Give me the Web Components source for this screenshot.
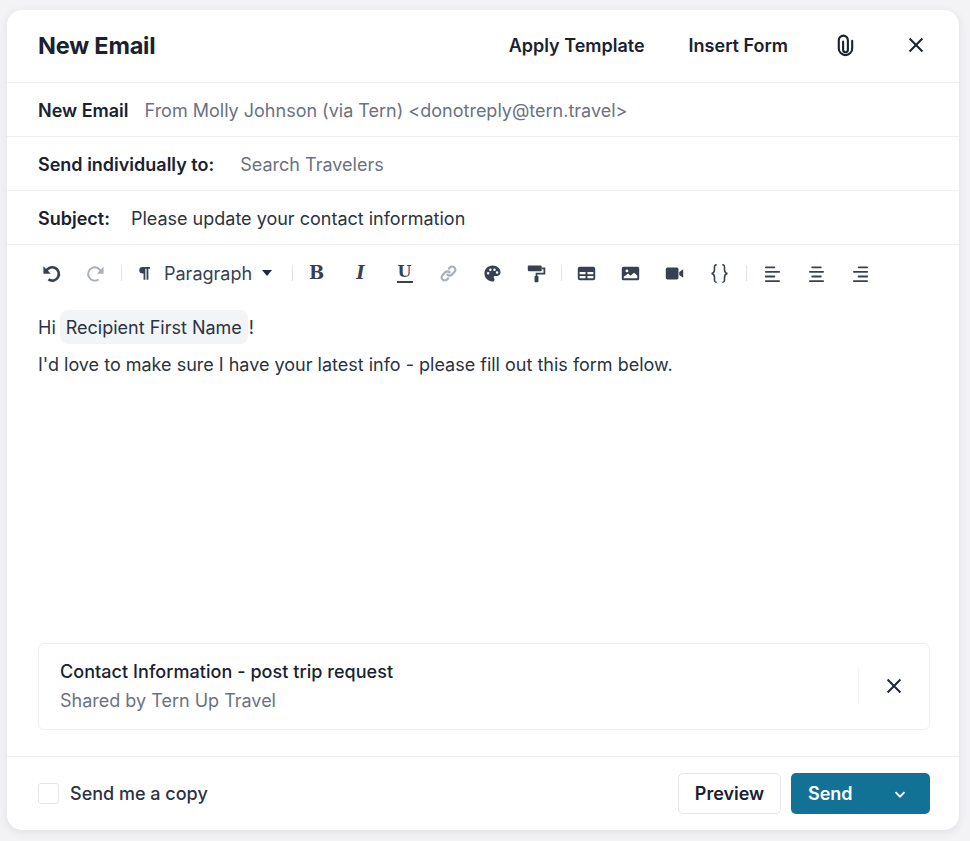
<!DOCTYPE html>
<html>
<head>
<meta charset="utf-8">
<title>New Email</title>
<style>
  html, body { margin: 0; height: 100%; }
  body {
    background: #f3f2f5;
    font-family: Inter, "Liberation Sans", sans-serif;
    color: #1a2230;
  }
</style>
</head>
<body>
<email-composer>
  <composer-header slot="header" title="New Email"></composer-header>
  <composer-row slot="rows" label="New Email" gap="16"><span class="muted">From Molly Johnson (via Tern) &lt;donotreply@tern.travel&gt;</span></composer-row>
  <composer-row slot="rows" label="Send individually to:" gap="26"><span class="muted">Search Travelers</span></composer-row>
  <composer-row slot="rows" label="Subject:" gap="21"><span>Please update your contact information</span></composer-row>
  <editor-toolbar slot="toolbar"></editor-toolbar>
  <editor-body slot="body"></editor-body>
  <attachment-card slot="attachment" name="Contact Information - post trip request" by="Shared by Tern Up Travel"></attachment-card>
  <composer-footer slot="footer"></composer-footer>
</email-composer>

<script>
const alignLines = (x1, x2) => `<g fill="currentColor"><rect x="${x1}" y="3" width="13" height="2.400" rx="1"/><rect x="${x2}" y="8.800" width="19" height="2.400" rx="1"/><rect x="${x1}" y="14.600" width="13" height="2.400" rx="1"/><rect x="${x2}" y="20.400" width="19" height="2.400" rx="1"/></g>`;

const ICONS = {
  undo: `<path d="M5.500 10.500A7.600 7.600 0 1 1 8.500 18.800" fill="none" stroke="currentColor" stroke-width="3"/><path d="M2.800 3.800v8.400h8.400z" fill="currentColor"/>`,
  redo: `<path d="M18.500 10.500A7.600 7.600 0 1 0 15.500 18.800" fill="none" stroke="currentColor" stroke-width="2.200"/><path d="M21.200 4.400v7.800h-7.800z" fill="currentColor"/>`,
  pilcrow: `<path d="M10 4h10v2.400h-2.200V21h-2.400V6.400h-1.600V21h-2.400v-8.400H10A4.300 4.300 0 0 1 10 4z" fill="currentColor"/>`,
  link: `<g fill="none" stroke="currentColor" stroke-width="2.800" stroke-linecap="round"><path d="M10.600 13.400a4 4 0 0 0 5.700 0l3.200-3.200a4 4 0 0 0-5.700-5.700l-1.300 1.300"/><path d="M13.400 10.600a4 4 0 0 0-5.700 0l-3.200 3.200a4 4 0 0 0 5.700 5.700l1.300-1.300"/></g>`,
  palette: `<path fill-rule="evenodd" fill="currentColor" d="M12 2C6.300 2 1.800 6.500 1.800 12.100s4.600 10 10.200 10c1.600 0 2.500-1.100 2.500-2.300 0-1.500-1.100-1.800-1.100-3 0-1 .9-1.700 2-1.700h2.400c2.700 0 4.400-2 4.400-4.600C21.800 5.500 17.600 2 12 2zM6.500 13.300a1.600 1.600 0 1 1 0-3.200 1.600 1.600 0 0 1 0 3.200zm2.800-4.300a1.600 1.600 0 1 1 0-3.200 1.600 1.600 0 0 1 0 3.200zm5.200-.2a1.600 1.600 0 1 1 0-3.200 1.600 1.600 0 0 1 0 3.200zm3.300 3.600a1.600 1.600 0 1 1 0-3.200 1.600 1.600 0 0 1 0 3.200z"/>`,
  roller: `<path fill="currentColor" d="M2 2h15.500a1 1 0 0 1 1 1v5a1 1 0 0 1-1 1H2a1 1 0 0 1-1-1V3a1 1 0 0 1 1-1z"/><path fill="none" stroke="currentColor" stroke-width="2.200" d="M18.500 5.500h3.500v6.700H12v3.500"/><rect x="9.500" y="15" width="5" height="8" rx="1" fill="currentColor"/>`,
  table: `<path fill-rule="evenodd" fill="currentColor" d="M3.500 3.500h17A2.500 2.500 0 0 1 23 6v12a2.500 2.500 0 0 1-2.500 2.500h-17A2.500 2.500 0 0 1 1 18V6a2.500 2.500 0 0 1 2.500-2.500zm-.2 6.600v3h7.500v-3H3.300zm9.900 0v3h7.500v-3h-7.500zm-9.900 5.100v2.900h7.500v-2.900H3.300zm9.900 0v2.900h7.500v-2.900h-7.500z"/>`,
  image: `<path fill-rule="evenodd" fill="currentColor" d="M3 3.500h18A2 2 0 0 1 23 5.500v13a2 2 0 0 1-2 2H3a2 2 0 0 1-2-2v-13a2 2 0 0 1 2-2zm.500 14.500h17v-3.500l-4-3.500-4.500 3.800L9 12l-5.500 4zM7.500 10.500a1.800 1.800 0 1 0 0-3.600 1.800 1.800 0 0 0 0 3.600z"/>`,
  video: `<rect x="1" y="4.500" width="16" height="15" rx="2" fill="currentColor"/><path d="M18 10.200 23 6.500v11l-5-3.700z" fill="currentColor"/>`,
  braces: `<g fill="none" stroke="currentColor" stroke-width="2"><path d="M8.500 1C5 1 5.700 3.500 5.700 7 5.700 10 5 11.500 2 12c3 .5 3.700 2 3.700 5 0 3.500-.7 6 2.800 6"/><path d="M15.500 1c3.500 0 2.800 2.500 2.800 6 0 3 .7 4.500 3.700 5-3 .5-3.700 2-3.700 5 0 3.500.7 6-2.800 6"/></g>`,
  left: alignLines(2.500, 2.500),
  center: alignLines(5.500, 2.500),
  right: alignLines(8.500, 2.500),
  close: `<path d="M5 5l14 14M19 5 5 19" fill="none" stroke="currentColor" stroke-width="2.200"/>`,
  clip: `<path d="M9.500 8v8.500a2.500 2.500 0 0 0 5 0V6.500a4.750 4.750 0 0 0-9.500 0V15a7 7 0 0 0 14 0V7" fill="none" stroke="currentColor" stroke-width="2.200" stroke-linecap="round"/>`,
  chevron: `<path d="M6 9.500l6 6 6-6" fill="none" stroke="currentColor" stroke-width="2.400"/>`
};

function svg(name, size) {
  return `<svg width="${size}" height="${size}" viewBox="0 0 24 24" aria-hidden="true">${ICONS[name]}</svg>`;
}

class EmailComposer extends HTMLElement {
  constructor() {
    super();
    this.attachShadow({ mode: "open" });
    this.shadowRoot.innerHTML = /* html */`
      <style>
        :host { display: block; box-sizing: border-box; height: 841px; padding: 10px 11px 11px 7px; }
        .card {
          height: 100%;
          display: flex;
          flex-direction: column;
          background: #fff;
          border-radius: 15px;
          box-shadow: 0 2px 10px rgba(60, 60, 90, 0.10);
          overflow: hidden;
        }
        .grow { flex: 1; min-height: 0; }
      </style>
      <div class="card">
        <slot name="header"></slot>
        <slot name="rows"></slot>
        <slot name="toolbar"></slot>
        <div class="grow"><slot name="body"></slot></div>
        <slot name="attachment"></slot>
        <slot name="footer"></slot>
      </div>
    `;
  }
}

class ComposerHeader extends HTMLElement {
  connectedCallback() {
    this.attachShadow({ mode: "open" }).innerHTML = /* html */`
      <style>
        :host { display: flex; box-sizing: border-box; height: 73px; align-items: center; padding: 0 31px 2px; border-bottom: 1px solid #eef0f2; color: #1a2230; }
        h1 { margin: 0; flex: 1; font-size: 23.500px; font-weight: 700; letter-spacing: -0.2px; }
        a { font-size: 18px; font-weight: 600; }
        .form { margin-left: 44px; }
        .clip { margin-left: 37px; width: 40px; display: flex; justify-content: center; }
        .close { margin-left: 40px; margin-right: 1px; display: flex; }
        svg { display: block; }
      </style>
      <h1>${this.getAttribute("title")}</h1>
      <a>Apply Template</a>
      <a class="form">Insert Form</a>
      <span class="clip">${svg("clip", 23)}</span>
      <span class="close">${svg("close", 22)}</span>
    `;
  }
}

class ComposerRow extends HTMLElement {
  connectedCallback() {
    this.attachShadow({ mode: "open" }).innerHTML = /* html */`
      <style>
        :host { display: flex; box-sizing: border-box; height: 54px; align-items: center; padding: 2px 31px 0; border-bottom: 1px solid #eef0f2; font-size: 18px; color: #2a3341; }
        b { font-weight: 600; color: #1a2230; margin-right: ${this.getAttribute("gap")}px; }
        ::slotted(.muted) { color: #6b7280; }
      </style>
      <b>${this.getAttribute("label")}</b>
      <slot></slot>
    `;
  }
}

class ToolButton extends HTMLElement {
  connectedCallback() {
    const dim = this.hasAttribute("dim");
    const text = this.getAttribute("text");
    this.attachShadow({ mode: "open" }).innerHTML = /* html */`
      <style>
        :host { display: flex; width: 44px; height: 24px; align-items: center; justify-content: center; color: ${dim ? "#aab0ba" : "#374151"}; }
        svg { display: block; }
        span { font-family: "DejaVu Serif", "Liberation Serif", serif; font-size: 18px; font-weight: 700; line-height: 20px; }
        .i { font-style: italic; }
        .u { border-bottom: 2px solid currentColor; line-height: 15px; font-size: 16px; padding: 0 1px 2px; }
      </style>
      ${text ? `<span class="${this.getAttribute("kind") || ""}">${text}</span>` : svg(this.getAttribute("icon"), this.getAttribute("size") || 19)}
    `;
  }
}

class EditorToolbar extends HTMLElement {
  constructor() {
    super();
    this.attachShadow({ mode: "open" });
    this.shadowRoot.innerHTML = /* html */`
      <style>
        :host { display: flex; align-items: center; box-sizing: border-box; height: 58px; padding: 0 0 2px 22px; }
        .sep { width: 1px; height: 16px; background: #dfe2e6; }
        .para { display: flex; align-items: center; font-size: 18px; color: #374151; margin: 0 20px 0 13px; }
        .para svg { display: block; margin-right: 11px; }
        .caret { width: 0; height: 0; border: 5.500px solid transparent; border-top: 6px solid #1f2937; border-bottom: 0; margin-left: 9.500px; }
      </style>
      <tool-button icon="undo" size="21"></tool-button>
      <tool-button icon="redo" size="21" dim></tool-button>
      <span class="sep" style="margin-left:4px"></span>
      <div class="para">${svg("pilcrow", 18)}Paragraph<span class="caret"></span></div>
      <span class="sep" style="margin-right:2px"></span>
      <tool-button text="B"></tool-button>
      <tool-button text="I" kind="i"></tool-button>
      <tool-button text="U" kind="u"></tool-button>
      <tool-button icon="link" dim></tool-button>
      <tool-button icon="palette"></tool-button>
      <tool-button icon="roller"></tool-button>
      <span class="sep" style="margin:0 3px 0 2px"></span>
      <tool-button icon="table"></tool-button>
      <tool-button icon="image"></tool-button>
      <tool-button icon="video"></tool-button>
      <tool-button icon="braces" style="margin-left:1px"></tool-button>
      <span class="sep" style="margin:0 4px 0 4px"></span>
      <tool-button icon="left"></tool-button>
      <tool-button icon="center"></tool-button>
      <tool-button icon="right"></tool-button>
    `;
  }
}

class EditorBody extends HTMLElement {
  constructor() {
    super();
    this.attachShadow({ mode: "open" });
    this.shadowRoot.innerHTML = /* html */`
      <style>
        :host { display: block; padding: 7px 31px 0; font-size: 18px; color: #2a3341; }
        p { margin: 0; display: flex; align-items: center; white-space: pre; }
        .first { height: 34px; margin-bottom: 2px; }
        .chip { box-sizing: border-box; display: inline-flex; align-items: center; height: 34px; padding: 0 6px; margin: 0 1px 0 4px; border-radius: 8px; background: #f2f4f5; }
        .line { height: 36px; }
      </style>
      <p class="first">Hi<span class="chip">Recipient First Name</span>!</p>
      <p class="line">I'd love to make sure I have your latest info - please fill out this form below.</p>
    `;
  }
}

class AttachmentCard extends HTMLElement {
  connectedCallback() {
    this.attachShadow({ mode: "open" }).innerHTML = /* html */`
      <style>
        :host { display: flex; box-sizing: border-box; height: 87px; margin: 0 29px 26px 31px; align-items: center; padding: 0 24px 2px 21px; border: 1px solid #eef0f2; border-radius: 6px; }
        .text { flex: 1; }
        .name { font-size: 18px; font-weight: 500; letter-spacing: 0.05px; color: #1a2230; margin-bottom: 8px; }
        .by { font-size: 18px; color: #6b7280; }
        .sep { width: 1px; height: 36px; background: #eef0f2; margin-right: 24px; }
        span { display: flex; color: #1f2937; }
      </style>
      <div class="text">
        <div class="name">${this.getAttribute("name")}</div>
        <div class="by">${this.getAttribute("by")}</div>
      </div>
      <div class="sep"></div>
      <span>${svg("close", 22)}</span>
    `;
  }
}

class ComposerFooter extends HTMLElement {
  constructor() {
    super();
    this.attachShadow({ mode: "open" });
    this.shadowRoot.innerHTML = /* html */`
      <style>
        :host { display: flex; box-sizing: border-box; height: 74px; align-items: center; padding: 0 29px 0 31px; border-top: 1px solid #eef0f2; font-size: 18px; }
        .box { box-sizing: border-box; width: 21px; height: 21px; border: 1px solid #e3e6ea; border-radius: 3px; margin-right: 11px; }
        .label { flex: 1; color: #2a3341; font-weight: 500; }
        .btn { box-sizing: border-box; display: flex; align-items: center; height: 41px; border-radius: 5px; font-weight: 600; }
        .preview { width: 103px; justify-content: center; border: 1px solid #e3e6ea; color: #1a2230; margin-right: 10px; }
        .send { width: 139px; padding: 0 21px 0 17px; justify-content: space-between; background: #127296; color: #fff; }
        svg { display: block; }
      </style>
      <span class="box"></span>
      <span class="label">Send me a copy</span>
      <div class="btn preview">Preview</div>
      <div class="btn send">Send ${svg("chevron", 18)}</div>
    `;
  }
}

customElements.define("email-composer", EmailComposer);
customElements.define("composer-header", ComposerHeader);
customElements.define("composer-row", ComposerRow);
customElements.define("tool-button", ToolButton);
customElements.define("editor-toolbar", EditorToolbar);
customElements.define("editor-body", EditorBody);
customElements.define("attachment-card", AttachmentCard);
customElements.define("composer-footer", ComposerFooter);
</script>
</body>
</html>
